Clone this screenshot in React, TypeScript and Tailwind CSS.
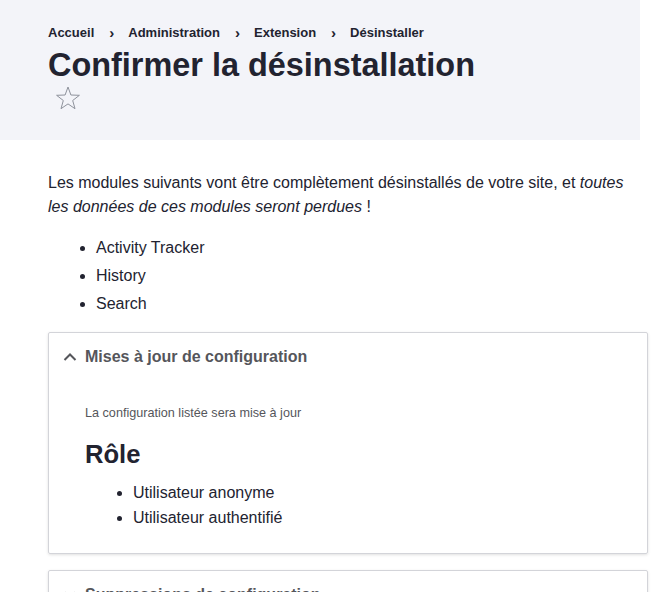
import type { FC } from "react";

const crumbs = ["Accueil", "Administration", "Extension", "Désinstaller"];
const modules = ["Activity Tracker", "History", "Search"];
const roles = ["Utilisateur anonyme", "Utilisateur authentifié"];

const Chevron: FC<{ up?: boolean }> = ({ up }) => (
  <svg width="14" height="14" viewBox="0 0 14 14" className="shrink-0">
    <path
      d={up ? "M1.5 10 L7 4.5 L12.5 10" : "M1.5 4.5 L7 10 L12.5 4.5"}
      fill="none"
      stroke="#55565b"
      strokeWidth="2"
    />
  </svg>
);

const Star: FC = () => (
  <svg width="26" height="26" viewBox="0 0 26 26">
    <path
      d="M13 2 L15.9 10 L24.4 10.3 L17.7 15.5 L20 23.7 L13 18.9 L6 23.7 L8.3 15.5 L1.6 10.3 L10.1 10 Z"
      fill="none"
      stroke="#8e929c"
      strokeWidth="1"
    />
  </svg>
);

const App: FC = () => {
  return (
    <div
      className="w-[652px] min-h-[592px] bg-white text-[#222330] overflow-hidden"
      style={{ fontFamily: '"Liberation Sans", Arial, sans-serif' }}>
      <div className="w-[640px] h-[140px] bg-[#f3f4f9] pl-12 pt-[25px]">
        <nav className="flex items-center text-[13px] font-bold leading-4">
          {crumbs.map((c, i) => (
            <div key={c} className="flex items-center">
              <span>{c}</span>
              {i < crumbs.length - 1 && (
                <span className="ml-[15px] mr-[14px] text-[15px] font-bold">›</span>
              )}
            </div>
          ))}
        </nav>
        <h1 className="mt-[6px] text-[32.43px] font-bold leading-[36px]">
          Confirmer la désinstallation
        </h1>
        <div className="ml-[7px] mt-[2px]">
          <Star />
        </div>
      </div>

      <div className="w-[648px] pl-12 pt-[31px]">
        <p className="text-[16px] leading-6">
          Les modules suivants vont être complètement désinstallés de votre site, et{" "}
          <em>toutes les données de ces modules seront perdues</em> !
        </p>
        <ul className="mt-[15px] list-disc pl-12 text-[16px] leading-[28px]">
          {modules.map((m) => (
            <li key={m}>{m}</li>
          ))}
        </ul>

        <div className="mt-[14px] w-[600px] border border-[#d3d4d9] rounded-[2px] shadow-[0_1px_3px_rgba(0,0,0,0.12)]">
          <div className="flex items-center gap-[8px] pl-[14px] pt-[1px] h-[47px] text-[16px] font-bold text-[#55565b]">
            <Chevron up />
            <span>Mises à jour de configuration</span>
          </div>
          <div className="pl-9 pb-[23px] pt-[24px]">
            <p className="text-[12.64px] leading-[18px] text-[#55565b]">
              La configuration listée sera mise à jour
            </p>
            <h3 className="mt-[17px] text-[25.6px] font-bold leading-[30px]">Rôle</h3>
            <ul className="mt-[11px] list-disc pl-12 text-[16px] leading-[25px]">
              {roles.map((r) => (
                <li key={r}>{r}</li>
              ))}
            </ul>
          </div>
        </div>

        <div className="mt-[16px] w-[600px] border border-[#d3d4d9] rounded-[2px] shadow-[0_1px_3px_rgba(0,0,0,0.12)]">
          <div className="flex items-center gap-[8px] pl-[14px] pt-[1px] h-[47px] text-[16px] font-bold text-[#55565b]">
            <Chevron />
            <span>Suppressions de configuration</span>
          </div>
        </div>
      </div>
    </div>
  );
};

export default App;
